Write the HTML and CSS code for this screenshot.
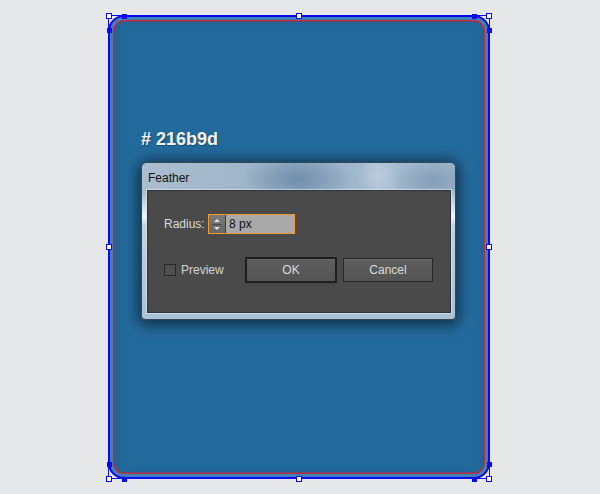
FILE: index.html
```
<!DOCTYPE html>
<html lang="en">
<head>
    <meta charset="UTF-8">
    <meta name="viewport" content="width=device-width, initial-scale=1.0">
    <title>Feather</title>
    <link rel="stylesheet" href="styles.css">
</head>
<body>

    <div class="canvas">
        <div class="artboard">
            <h1 class="swatch-label"># 216b9d</h1>

            <div class="dialog">
                <div class="dialog-title">Feather</div>
                <div class="dialog-body">
                    <div class="field-row">
                        <span class="field-label">Radius:</span>
                        <div class="spin-input">
                            <span class="spinner">
                                <svg width="16" height="18" viewBox="0 0 16 18">
                                    <path d="M5 7 L8 4 L11 7 Z" fill="#e4e4e4"/>
                                    <line x1="3" y1="9.5" x2="13" y2="9.5" stroke="#4a4a4a" stroke-width="1"/>
                                    <path d="M5 12 L8 15 L11 12 Z" fill="#e4e4e4"/>
                                </svg>
                            </span>
                            <span class="spin-value">8 px</span>
                        </div>
                    </div>

                    <div class="action-row">
                        <label class="check">
                            <span class="check-box"></span>
                            Preview
                        </label>
                        <button class="btn btn-default">OK</button>
                        <button class="btn">Cancel</button>
                    </div>
                </div>
            </div>

            <!-- selection box and handles -->
            <span class="bbox"></span>
            <span class="handle h-tl"></span>
            <span class="handle h-tm"></span>
            <span class="handle h-tr"></span>
            <span class="handle h-ml"></span>
            <span class="handle h-mr"></span>
            <span class="handle h-bl"></span>
            <span class="handle h-bm"></span>
            <span class="handle h-br"></span>

            <span class="anchor a-t1"></span>
            <span class="anchor a-t2"></span>
            <span class="anchor a-l1"></span>
            <span class="anchor a-r1"></span>
            <span class="anchor a-l2"></span>
            <span class="anchor a-r2"></span>
            <span class="anchor a-b1"></span>
            <span class="anchor a-b2"></span>
        </div>
    </div>

</body>
</html>
```

FILE: styles.css
```
/* Reset */
* {
    margin: 0;
    padding: 0;
    box-sizing: border-box;
}

body {
    font-family: 'Liberation Sans', Arial, sans-serif;
    background-color: #e6e7e9;
    width: 600px;
    height: 494px;
    overflow: hidden;
}

.canvas {
    padding: 15px 0 0 108px;
}

/* Rounded rectangle on the artboard */
.artboard {
    position: relative;
    width: 382px;
    height: 464px;
    border: 2px solid #0a0af2;
    border-radius: 16px;
    background-color: #236a9c;
    box-shadow:
        inset 0 0 0 3px #3f80b5,
        inset 0 0 0 4.5px #c02a40,
        inset 0 0 10px 6px #1f6393;
    padding: 112px 0 0 31px;
}

.swatch-label {
    font-size: 18px;
    font-weight: bold;
    line-height: 20px;
    color: #f4f4f4;
    text-shadow: 1px 1px 1px rgba(0, 0, 0, 0.3);
}

/* Feather dialog */
.dialog {
    margin-top: 13px;
    width: 315px;
    height: 158px;
    border: 1px solid #34475a;
    border-radius: 6px 6px 4px 4px;
    padding: 0 4px 6px 5px;
    background:
        linear-gradient(to bottom,
            #a8bcd0 0,
            #a4b9cd 27px,
            #c8d6e2 40px,
            #f2f6f9 54px,
            #c2d2e0 62px,
            #a9c0d5 100%);
    box-shadow:
        inset 0 1px 0 rgba(255, 255, 255, 0.7),
        0 2px 14px 3px rgba(0, 0, 0, 0.55);
}

.dialog-title {
    height: 27px;
    margin: 0 -4px 0 -5px;
    padding: 8px 0 0 6px;
    font-size: 12px;
    line-height: 14px;
    color: #111;
    border-radius: 5px 5px 0 0;
    background:
        radial-gradient(ellipse 55px 24px at 156px 16px, rgba(90, 123, 155, 0.6), rgba(90, 123, 155, 0)),
        radial-gradient(ellipse 22px 30px at 237px 12px, rgba(200, 216, 230, 0.6), rgba(200, 216, 230, 0)),
        radial-gradient(ellipse 40px 22px at 290px 18px, rgba(100, 132, 162, 0.45), rgba(100, 132, 162, 0)),
        linear-gradient(to right, #abbed0 0, #a1b6ca 30%, #93acc4 50%, #a6bbcf 75%, #9cb3c8 100%);
}

.dialog-body {
    width: 304px;
    height: 123px;
    background-color: #4a4a4a;
    border: 1px solid #2a333c;
    box-shadow: 0 0 0 1px rgba(235, 242, 248, 0.55);
    padding: 23px 0 0 16px;
}

.field-row {
    display: flex;
    align-items: center;
    height: 20px;
}

.field-label {
    font-size: 12px;
    color: #dadada;
    width: 44px;
}

.spin-input {
    display: flex;
    width: 87px;
    height: 20px;
    border: 1px solid #f39a2a;
}

.spinner {
    width: 17px;
    height: 18px;
    background: linear-gradient(to bottom, #7a7a7a, #676767);
    border-right: 1px solid #3a3a3a;
}

.spinner svg {
    display: block;
}

.spin-value {
    flex: 1;
    background-color: #a9a9a9;
    font-size: 12px;
    line-height: 18px;
    color: #111;
    padding-left: 3px;
}

.action-row {
    display: flex;
    align-items: center;
    margin-top: 23px;
    height: 26px;
}

.check {
    display: flex;
    align-items: center;
    width: 81px;
    font-size: 12px;
    color: #d4d4d4;
}

.check-box {
    width: 12px;
    height: 12px;
    border: 1px solid #262626;
    background-color: #4f4f4f;
    margin-right: 5px;
}

.btn {
    font-family: 'Liberation Sans', Arial, sans-serif;
    font-size: 12px;
    color: #dcdcdc;
    width: 90px;
    height: 24px;
    border: 1px solid #262626;
    background: linear-gradient(to bottom, #5e5e5e, #545454);
    box-shadow: inset 0 1px 0 rgba(255, 255, 255, 0.08);
}

.btn-default {
    width: 92px;
    height: 26px;
    border: 2px solid #1e1e1e;
    margin-right: 6px;
}

/* Selection overlay */
.bbox {
    position: absolute;
    top: -2px;
    left: -2px;
    right: -2px;
    bottom: -2px;
    border: 1px solid #0a0af2;
}

.handle {
    position: absolute;
    width: 6px;
    height: 6px;
    border: 1px solid #0a0af2;
    background-color: #fff;
}

.h-tl { left: -4px; top: -4px; }
.h-tm { left: 186px; top: -4px; }
.h-tr { left: 376px; top: -4px; }
.h-ml { left: -4px; top: 227px; }
.h-mr { left: 376px; top: 227px; }
.h-bl { left: -4px; top: 459px; }
.h-bm { left: 186px; top: 459px; }
.h-br { left: 376px; top: 459px; }

.anchor {
    position: absolute;
    width: 5px;
    height: 5px;
    background-color: #0a0af2;
}

.a-t1 { left: 12px; top: -3px; }
.a-t2 { left: 362px; top: -3px; }
.a-l1 { left: -3px; top: 11px; }
.a-r1 { left: 377px; top: 11px; }
.a-l2 { left: -3px; top: 445px; }
.a-r2 { left: 377px; top: 445px; }
.a-b1 { left: 12px; top: 460px; }
.a-b2 { left: 362px; top: 460px; }
```
